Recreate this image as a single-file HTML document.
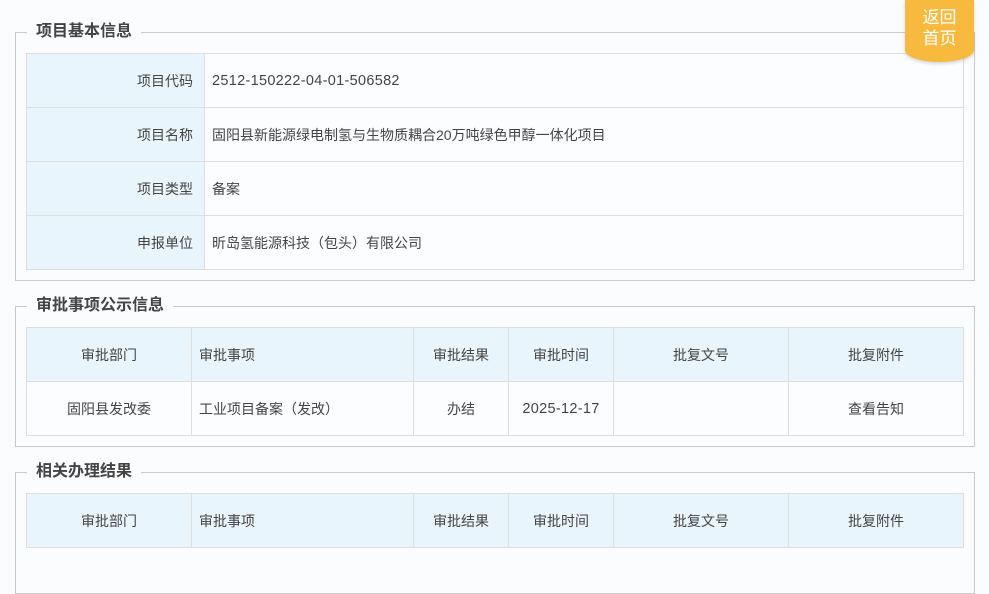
<!DOCTYPE html>
<html><head><meta charset="utf-8"><style>
body{margin:0;background:#fbfcfd;font-family:"Liberation Sans","Noto Sans CJK SC",sans-serif;color:#333;width:989px;height:556px;overflow:hidden;position:relative}
.fs{position:absolute;left:15px;width:958px;border:1px solid #c9c9c9}
.lg{position:absolute;left:11px;top:-12px;background:#fbfcfd;padding:0 9px;font-size:16px;font-weight:bold;color:#444;line-height:22px}
table{position:absolute;left:10px;border-collapse:collapse;width:938px;font-size:14px;table-layout:fixed}
td{border:1px solid #dedede;height:54px;padding:0;color:#444;box-sizing:border-box}
.h{background:#e9f5fc}
.k{text-align:right;padding-right:11px}
.v{padding-left:7px;background:#fcfdfe}
.n{font-size:14.5px;letter-spacing:0.3px}
.c td{text-align:center}
.btn{position:absolute;left:905px;top:0;width:69px;height:62px;background:#f7ba3e;border-radius:0 0 34px 34px/0 0 12px 12px;color:#fff;font-size:17px;text-align:center;line-height:21px;padding-top:7px;box-sizing:border-box;box-shadow:0 2px 3px rgba(0,0,0,.15)}
</style></head><body>
<div class="fs" style="top:32px;height:247px"><div class="lg">项目基本信息</div>
<table style="top:20px"><colgroup><col style="width:178px"><col></colgroup>
<tr><td class="h k">项目代码</td><td class="v n">2512-150222-04-01-506582</td></tr>
<tr><td class="h k">项目名称</td><td class="v">固阳县新能源绿电制氢与生物质耦合20万吨绿色甲醇一体化项目</td></tr>
<tr><td class="h k">项目类型</td><td class="v">备案</td></tr>
<tr><td class="h k">申报单位</td><td class="v">昕岛氢能源科技（包头）有限公司</td></tr>
</table></div>
<div class="fs" style="top:306px;height:139px"><div class="lg">审批事项公示信息</div>
<table class="c" style="top:20px"><colgroup><col style="width:165px"><col style="width:222px"><col style="width:95px"><col style="width:105px"><col style="width:175px"><col></colgroup>
<tr class="h"><td>审批部门</td><td style="text-align:left;padding-left:7px">审批事项</td><td>审批结果</td><td>审批时间</td><td>批复文号</td><td>批复附件</td></tr>
<tr style="background:#fcfdfe"><td>固阳县发改委</td><td style="text-align:left;padding-left:7px">工业项目备案（发改）</td><td>办结</td><td class="n">2025-12-17</td><td></td><td>查看告知</td></tr>
</table></div>
<div class="fs" style="top:472px;height:120px"><div class="lg">相关办理结果</div>
<table class="c" style="top:20px"><colgroup><col style="width:165px"><col style="width:222px"><col style="width:95px"><col style="width:105px"><col style="width:175px"><col></colgroup>
<tr class="h"><td>审批部门</td><td style="text-align:left;padding-left:7px">审批事项</td><td>审批结果</td><td>审批时间</td><td>批复文号</td><td>批复附件</td></tr>
</table></div>
<div class="btn">返回<br>首页</div>
</body></html>
